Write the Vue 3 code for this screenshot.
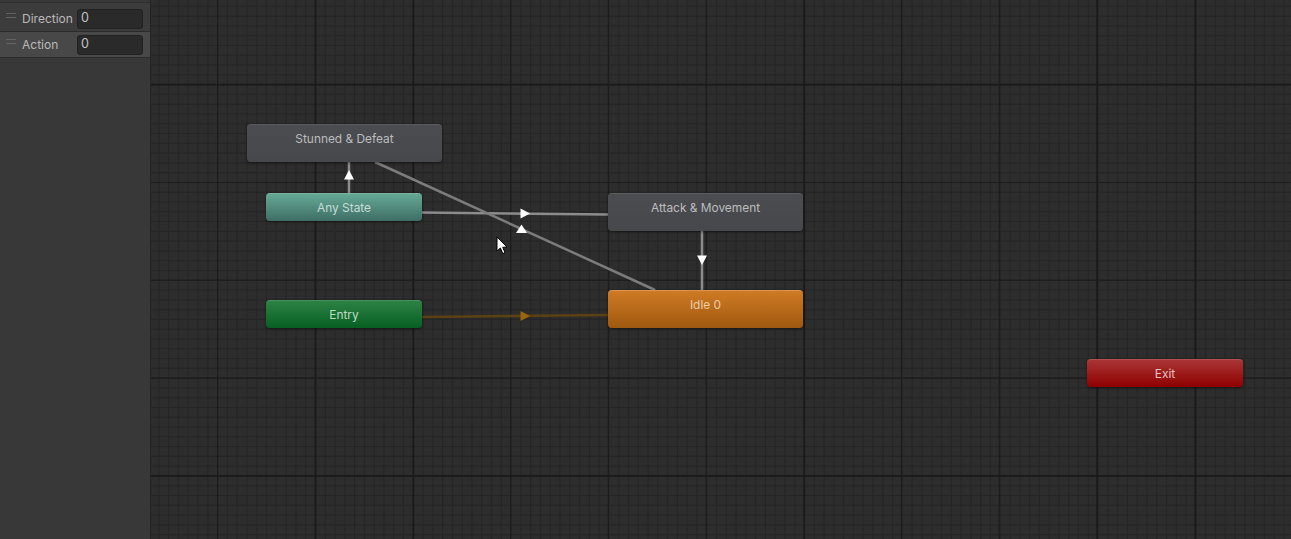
<script setup>
const params = [
  { name: 'Direction', value: '0' },
  { name: 'Action', value: '0', active: true },
];

const nodes = [
  { label: 'Stunned & Defeat', kind: 'plain', x: 247, y: 124, w: 195, h: 38 },
  { label: 'Any State', kind: 'any', x: 266, y: 193, w: 156, h: 28 },
  { label: 'Attack & Movement', kind: 'plain', x: 608, y: 193, w: 195, h: 38 },
  { label: 'Idle 0', kind: 'idle', x: 608, y: 290, w: 195, h: 38 },
  { label: 'Entry', kind: 'entry', x: 266, y: 300, w: 156, h: 28 },
  { label: 'Exit', kind: 'exit', x: 1087, y: 359, w: 156, h: 28 },
];

const nodeBox = (n) => ({
  left: n.x + 'px',
  top: n.y + 'px',
  width: n.w + 'px',
  height: n.h + 'px',
});

// grid lines, in canvas coords (sidebar takes the first 151px)
const STEP = 97.83;
const range = (start, end, step) => {
  const out = [];
  for (let v = start; v < end; v += step) out.push(v);
  return out;
};
const xMinor = range(217.6 - 151 - STEP, 1140, STEP / 10);
const yMinor = range(84.6 - STEP, 539, STEP / 10);

// screen capture was scaled, so some major lines came out heavier than others
const xMajor = [
  { at: 217.6, heavy: false },
  { at: 315.5, heavy: true },
  { at: 413.3, heavy: true },
  { at: 510.6, heavy: false },
  { at: 608.3, heavy: false },
  { at: 706.2, heavy: false },
  { at: 804.2, heavy: true },
  { at: 901.5, heavy: false },
  { at: 999.3, heavy: false },
  { at: 1097.2, heavy: true },
  { at: 1195.3, heavy: true },
].map((l) => ({ ...l, at: l.at - 151 }));
const yMajor = [
  { at: 84.6, heavy: true },
  { at: 182.5, heavy: false },
  { at: 280.3, heavy: false },
  { at: 378.1, heavy: false },
  { at: 475.8, heavy: true },
];
</script>

<template>
  <div class="window">
    <aside class="side">
      <div class="side-top"></div>
      <div v-for="p in params" :key="p.name" class="param" :class="{ active: p.active }">
        <span class="handle"></span>
        <span class="param-name">{{ p.name }}</span>
        <span class="param-input">{{ p.value }}</span>
      </div>
    </aside>

    <main class="canvas">
      <svg class="layer" width="1140" height="539">
        <line v-for="x in xMinor" :key="'vm' + x" :x1="x" :x2="x" y1="0" y2="539" class="minor" />
        <line v-for="y in yMinor" :key="'hm' + y" :y1="y" :y2="y" x1="0" x2="1140" class="minor" />
        <line
          v-for="l in xMajor"
          :key="'vM' + l.at"
          :x1="l.at"
          :x2="l.at"
          y1="0"
          y2="539"
          class="major"
          :class="{ heavy: l.heavy }"
        />
        <line
          v-for="l in yMajor"
          :key="'hM' + l.at"
          :y1="l.at"
          :y2="l.at"
          x1="0"
          x2="1140"
          class="major"
          :class="{ heavy: l.heavy }"
        />
      </svg>

      <svg class="layer" width="1140" height="539">
        <!-- shifted so the numbers read as page coords -->
        <g transform="translate(-151 0)">
          <line x1="349" y1="193" x2="349" y2="162" class="link" />
          <line x1="422" y1="212.5" x2="608" y2="214.5" class="link" />
          <line x1="375" y1="162" x2="655" y2="290" class="link dim" />
          <line x1="702" y1="231" x2="702" y2="290" class="link" />
          <line x1="422" y1="317" x2="608" y2="315" class="link entry-link" />

          <polygon points="349,170 344,179.5 354,179.5" class="tip" />
          <polygon points="530,213.5 520.5,208.5 520.5,218.5" class="tip" />
          <polygon points="521.5,224.5 516,233 527,233" class="tip" />
          <polygon points="702,265 697,255.5 707,255.5" class="tip" />
          <polygon points="530,316 520.5,311 520.5,321" class="tip-entry" />
        </g>
      </svg>

      <div
        v-for="n in nodes"
        :key="n.label"
        class="node"
        :class="n.kind"
        :style="nodeBox(n)"
      >{{ n.label }}</div>

      <svg class="cursor" width="14" height="20" viewBox="0 0 14 20">
        <path d="M1 1 L1 15 L4.4 12 L6.8 17.6 L9 16.6 L6.7 11.3 L11 11 Z" fill="#fff" stroke="#000" stroke-width="1" />
      </svg>
    </main>
  </div>
</template>

<style>
html, body {
  margin: 0;
  background: #2d2d2d;
  overflow: hidden;
}
</style>

<style scoped>
.window {
  display: flex;
  width: 1291px;
  height: 539px;
  overflow: hidden;
  font-family: Inter, "Liberation Sans", sans-serif;
}
.side {
  width: 150px;
  flex: none;
  background: #383838;
  border-right: 1px solid #242424;
}
.side-top {
  height: 3px;
  margin-top: 2px;
  background: #3c3c3c;
  border-top: 1px solid #2e2e2e;
}
.param {
  display: flex;
  align-items: center;
  height: 25px;
  padding: 0 7px 0 6px;
  background: #3c3c3c;
  border-bottom: 1px solid #2b2b2b;
}
.param.active {
  background: #484848;
}
.handle {
  width: 10px;
  height: 3px;
  flex: none;
  margin: -7px 6px 0 0;
  border-top: 1px solid #626262;
  border-bottom: 1px solid #626262;
}
.param-name {
  width: 55px;
  flex: none;
  font-size: 12px;
  color: #b8b8b8;
}
.param-input {
  flex: 1;
  height: 20px;
  box-sizing: border-box;
  padding-left: 3px;
  line-height: 16px;
  font-size: 12.5px;
  color: #c4c4c4;
  background: #2a2a2a;
  border: 1px solid #212121;
  border-radius: 3px;
}
.canvas {
  position: relative;
  flex: 1;
  background: #2d2d2d;
}
.layer {
  position: absolute;
  left: 0;
  top: 0;
}
.minor {
  stroke: #262626;
  stroke-width: 1.1;
}
.major {
  stroke: #1c1c1c;
  stroke-width: 1.1;
}
.major.heavy {
  stroke: #1a1a1a;
  stroke-width: 1.7;
}
.link {
  stroke: #8c8c8c;
  stroke-width: 2.5;
}
.link.dim {
  stroke: #7c7c7c;
}
.link.entry-link {
  stroke: #5c4114;
}
.tip {
  fill: #fff;
}
.tip-entry {
  fill: #9c640f;
}
.node {
  position: absolute;
  box-sizing: border-box;
  margin-left: -151px;
  padding-top: 6px;
  text-align: center;
  font-size: 11.9px;
  line-height: 15px;
  border-radius: 4px;
  box-shadow: 0 1px 3px rgba(0, 0, 0, 0.45);
}
.plain {
  color: #bcbcbc;
  background: linear-gradient(#4a4c50, #46484c);
  border-top: 1px solid #5a5c60;
}
.any {
  color: #c4dcd4;
  background: linear-gradient(#65a894, #3e6e66);
  border-top: 1px solid #78b4a2;
}
.entry {
  color: #bcdcc4;
  background: linear-gradient(#2c8244, #075f22);
  border-top: 1px solid #46925c;
}
.idle {
  color: #eccba8;
  background: linear-gradient(#cf7a24, #9f590f);
  border-top: 1px solid #dc9650;
}
.exit {
  color: #e8c0c0;
  background: linear-gradient(#a93434, #8f0000);
  border-top: 1px solid #b65050;
}
.cursor {
  position: absolute;
  left: 345px;
  top: 236px;
}
</style>
